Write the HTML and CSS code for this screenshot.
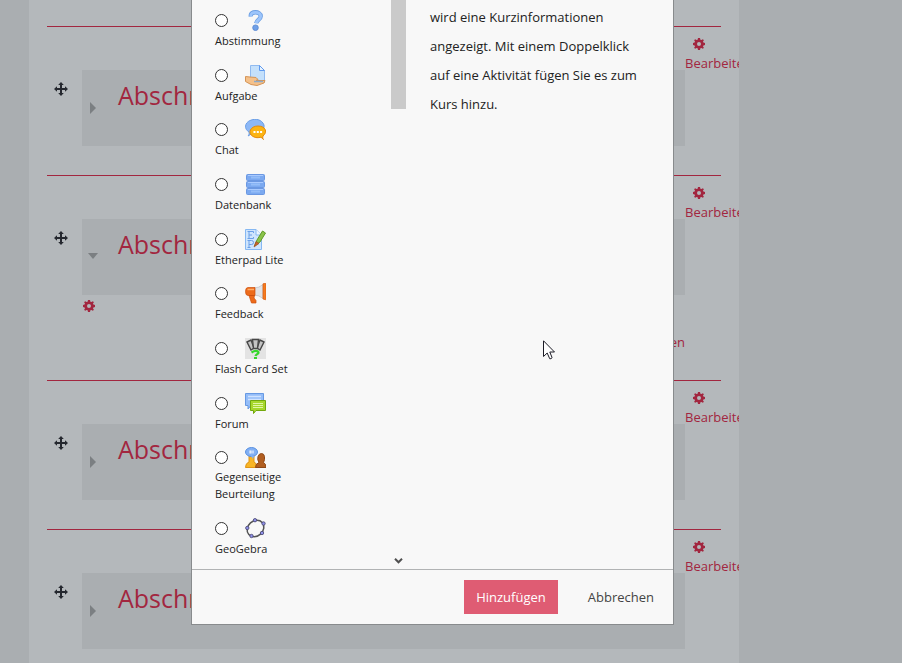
FILE: index.html
```html
<!DOCTYPE html>
<html lang="de">
<head>
<meta charset="utf-8">
<title>Aktivität hinzufügen</title>
<link rel="stylesheet" href="styles.css">
</head>
<body>
<svg class="defs" aria-hidden="true">
  <symbol id="move" viewBox="0 0 14 14"><path d="M7 0 4.200 3h1.800v3H3V4.200L0 7l3 2.800V8h3v3H4.200L7 14l2.800-3H8V8h3v1.800L14 7l-3-2.800V6H8V3h1.800z"/></symbol>
  <symbol id="gear" viewBox="0 0 12 12"><path fill-rule="evenodd" d="M5 0h2l.4 1.700 1 .4L9.900 1.200 10.900 2.200 10 3.600l.4 1L12 5v2l-1.600.4-.4 1 .9 1.400-1 1-1.500-.9-1 .4L7 12H5l-.4-1.700-1-.4-1.500.9-1-1L2 8.400l-.4-1L0 7V5l1.600-.4.400-1L1.100 2.200l1-1 1.500.9 1-.4zM6 4a2 2 0 1 0 0 4 2 2 0 0 0 0-4z"/></symbol>
</svg>

<main class="course">
  <section class="section">
    <button class="move" aria-label="Verschieben"><svg><use href="#move"/></svg></button>
    <div class="content"><div class="head"><span class="arrow"></span><h2>Abschnitt</h2></div></div>
    <a class="edit" href="#"><svg><use href="#gear"/></svg>Bearbeiten</a>
  </section>
  <section class="section">
    <button class="move" aria-label="Verschieben"><svg><use href="#move"/></svg></button>
    <div class="content">
      <div class="head"><span class="arrow open"></span><h2>Abschnitt</h2></div>
      <a class="settings" href="#" aria-label="Einstellungen"><svg><use href="#gear"/></svg></a>
      <a class="add" href="#">Material oder Aktivität hinzufügen</a>
    </div>
    <a class="edit" href="#"><svg><use href="#gear"/></svg>Bearbeiten</a>
  </section>
  <section class="section">
    <button class="move" aria-label="Verschieben"><svg><use href="#move"/></svg></button>
    <div class="content"><div class="head"><span class="arrow"></span><h2>Abschnitt</h2></div></div>
    <a class="edit" href="#"><svg><use href="#gear"/></svg>Bearbeiten</a>
  </section>
  <section class="section">
    <button class="move" aria-label="Verschieben"><svg><use href="#move"/></svg></button>
    <div class="content"><div class="head"><span class="arrow"></span><h2>Abschnitt</h2></div></div>
    <a class="edit" href="#"><svg><use href="#gear"/></svg>Bearbeiten</a>
  </section>
</main>

<div class="overlay">
  <form class="dialog" role="dialog" aria-label="Aktivität hinzufügen">
    <div class="body">
      <div class="options">
        <div class="option"><input type="radio" name="act" id="a1">
          <svg class="icon" viewBox="0 0 21 21"><path d="M5.800 6.500C5.500 3 8 2.300 10.500 2.300s5.200 1.200 5.200 3.900c0 3.300-4 3.400-4.500 7" fill="none" stroke="#6c9fe3" stroke-width="4.400"/><path d="M5.800 6.500C5.500 3 8 2.300 10.500 2.300s5.200 1.200 5.200 3.900c0 3.300-4 3.400-4.500 7" fill="none" stroke="#9dc5fb" stroke-width="2.800"/><circle cx="10.500" cy="17.700" r="2.800" fill="#6fa0e8" stroke="#5585cf" stroke-width=".8"/></svg>
          <label for="a1">Abstimmung</label></div>
        <div class="option"><input type="radio" name="act" id="a2">
          <svg class="icon" viewBox="0 0 21 21"><path d="M5.500.5h9l5 5v12h-14z" fill="#c4e0fb" stroke="#90baf0"/><path d="M14.500.5v5h5z" fill="#e6f3ff" stroke="#5f9af0"/><path d="M.5 11.500 5 12l6 .5 2 2-2 1h9l-1 2.500-7 2.500-6-1-5.500-3z" fill="#f5c18a" stroke="#d49456"/><path d="M9 16.500h9" stroke="#8daac8" stroke-width="1.500"/></svg>
          <label for="a2">Aufgabe</label></div>
        <div class="option"><input type="radio" name="act" id="a3">
          <svg class="icon" viewBox="0 0 21 21"><path d="M3 17c1-1 1.500-2.500 1-4-5-3-4.500-9 1-11.500S17 .5 19 6c1 6-6 9-11 8z" fill="#8db8f6" stroke="#6c9fe6"/><path d="M18.500 20.500c-.8-1-1-2-.5-3.500 5-4 2.500-10-5-10s-11 7-5 10.500c3 1.600 5 1.300 8 .700z" fill="#fcb413" stroke="#e58a0b"/><path d="M8.500 13h2m1.300 0h2m1.300 0h2" stroke="#fff" stroke-width="2"/></svg>
          <label for="a3">Chat</label></div>
        <div class="option"><input type="radio" name="act" id="a4">
          <svg class="icon" viewBox="0 0 21 21"><g fill="#7ba9f0" stroke="#6b98e2"><rect x="1.500" y=".5" width="18" height="6" rx="1"/><rect x="1.500" y="7.500" width="18" height="6" rx="1"/><rect x="1.500" y="14.500" width="18" height="6" rx="1"/></g><path d="M3 1.500h15M3 8.500h15M3 15.500h15" stroke="#a9caff"/><path d="M6 3.500h9M6 10.500h9M6 17.500h9" stroke="#94bdf8" stroke-width="2"/></svg>
          <label for="a4">Datenbank</label></div>
        <div class="option"><input type="radio" name="act" id="a5">
          <svg class="icon" viewBox="0 0 21 21"><path d="M.5.5H11l5.500 5.500v14.500H.5z" fill="#cfe5fd" stroke="#86b8f2"/><path d="M11 .5V6h5.500" fill="#edf6ff" stroke="#86b8f2"/><path d="M8.500 4V2.500h-6m1.500 0v7m-1.500 0h6V8M4 6h3M2.500 11.500h4q2 0 2 2t-2 2H4m0-4v7m-1.500 0h3" fill="none" stroke="#6ba0e8"/><path d="M9.500 17 12 11l5.500-9 3 2-5.500 9z" fill="#8bc34a" stroke="#5f9b26"/><path d="M9 18l2-5.500 3 2z" fill="#c8622d" stroke="#9a4d20" stroke-width=".6"/></svg>
          <label for="a5">Etherpad Lite</label></div>
        <div class="option"><input type="radio" name="act" id="a6">
          <svg class="icon" viewBox="0 0 21 21"><path d="M9 5q5 0 9-3.500v14q-4-3.500-9-3.500z" fill="#e2e3e6" stroke="#b9bbc0" stroke-width=".7"/><path d="M18 .8q3-1 3 0v15.500q0 1-3-.3z" fill="#f47b20" stroke="#d85b10" stroke-width=".7"/><path d="M3 4.500h7v8H3Q.5 12.500.5 8.500T3 4.500zM4 12.500h5.500L9 15l2 2.500v2.500H6.500z" fill="#ed6b1b" stroke="#cc500e" stroke-width=".7"/><path d="M2.500 6.500H9" stroke="#ffae69" stroke-width="1.500"/></svg>
          <label for="a6">Feedback</label></div>
        <div class="option"><input type="radio" name="act" id="a7">
          <svg class="icon" viewBox="0 0 21 21"><path d="M0 0h21v21H0z" fill="#e3e3e3"/><g fill="#c4c4c4" stroke="#484848" stroke-width="1.400"><path d="m2 4 4-2 3 8-3 2z"/><path d="m19 4-4-2-3 8 3 2z"/><path d="M7.500 1.500h6l-1 9h-4z"/></g><path d="M6.500 14.500q4-2.500 6.500-1c2 2-2 2.500-2.500 4.500" fill="none" stroke="#35d62c" stroke-width="2.200"/><path d="M9 19h3v2H9z" fill="#35d62c"/></svg>
          <label for="a7">Flash Card Set</label></div>
        <div class="option"><input type="radio" name="act" id="a8">
          <svg class="icon" viewBox="0 0 21 21"><path d="M.5.5h18v12H6l-3 3.500v-3.500H.5z" fill="#94bdf8" stroke="#6799e3"/><path d="M3 3.500h13M3 6.500h13" stroke="#cfe3ff" stroke-width="1.500"/><path d="M5.500 7.500h15v10H11l-2.500 3v-3h-3z" fill="#a6d72b" stroke="#72a80d"/><path d="M8 10.500h10M8 12.500h10M8 14.500h10" stroke="#e1f6a5"/></svg>
          <label for="a8">Forum</label></div>
        <div class="option two-line"><input type="radio" name="act" id="a9">
          <svg class="icon" viewBox="0 0 21 21"><path d="M.5 20.500Q.5 16 4 15V9h5v6q3 1 3 5.500z" fill="#f8b525" stroke="#df9416"/><path d="M10.500 20.500q0-4 3.500-5-2-3-1-6t3.500-3 3 3-1 6q2.500 1 2.500 5z" fill="#b15e20" stroke="#8e4816"/><ellipse cx="6.500" cy="5" rx="6" ry="4.500" fill="#82b0f4" stroke="#5a91e0"/><path d="m6 9 2 3 1-3z" fill="#82b0f4"/><path d="M5 3.500v3m1-3v3m2-3v3" stroke="#fff"/></svg>
          <label for="a9">Gegenseitige Beurteilung</label></div>
        <div class="option"><input type="radio" name="act" id="a10">
          <svg class="icon" viewBox="0 0 21 21"><ellipse cx="10.500" cy="10.500" rx="9" ry="7.500" transform="rotate(-42 10.500 10.500)" fill="none" stroke="#555" stroke-width="1.500"/><g fill="#9090e8" stroke="#44446c" stroke-width=".8"><circle cx="10" cy="2.200" r="1.700"/><circle cx="18.500" cy="5.500" r="1.700"/><circle cx="17" cy="15" r="1.700"/><circle cx="6.500" cy="18" r="1.700"/><circle cx="2.300" cy="10" r="1.700"/></g></svg>
          <label for="a10">GeoGebra</label></div>
      </div>
      <div class="scrollbar"><span class="thumb"></span><svg class="down" viewBox="0 0 9 6"><path d="m1 .8 3.500 3.500L8 .8" fill="none" stroke="#505050" stroke-width="2"/></svg></div>
      <p class="help">wird eine Kurzinformationen angezeigt. Mit einem Doppelklick auf eine Aktivität fügen Sie es zum Kurs hinzu.</p>
    </div>
    <div class="footer">
      <button type="button" class="btn primary">Hinzufügen</button>
      <button type="button" class="btn">Abbrechen</button>
    </div>
  </form>
</div>
<svg class="pointer" viewBox="0 0 12 20" aria-hidden="true"><path d="M.5.800v15.700l3.700-3.500 2.500 5.700q1.300.5 2.400-1L6.800 12h4.700z" fill="#fff" stroke="#1c1c26"/></svg>
</body>
</html>
```

FILE: styles.css
```css
* { box-sizing: border-box; }

body {
  margin: 0;
  height: 100vh;
  overflow: hidden;
  background: #aaaeb1;
  color: #222;
  font: 13px/18px "Open Sans", "Noto Sans", sans-serif;
}

button { font: inherit; border: 0; background: none; padding: 0; }
a { color: #a2263f; text-decoration: none; }
.defs { display: none; }

.course {
  margin: 0 163px 0 29px;
  padding: 26px 18px 0;
  min-height: 100vh;
  overflow: hidden;
  background: #b4b8bb;
}

.section {
  display: flex;
  align-items: flex-start;
  border-top: 1px solid #a2263f;
  padding-bottom: 29px;
}

.move { width: 35px; padding: 55px 0 0 7px; text-align: left; }
.move svg { display: block; width: 14px; height: 14px; fill: #25282f; }
.content { flex: 1; padding-top: 43px; }

.head {
  display: flex;
  height: 76px;
  padding: 7px 8px;
  background: #aaaeb1;
}

.arrow {
  width: 6px;
  height: 12px;
  margin: 25px 22px 0 0;
  background: #7b7f82;
  clip-path: polygon(0 0, 100% 50%, 0 100%);
}
.arrow.open {
  width: 10px;
  height: 6px;
  margin: 27px 20px 0 -2px;
  clip-path: polygon(0 0, 100% 0, 50% 100%);
}

.head h2 {
  margin: 0;
  color: #a2263f;
  font-size: 25px;
  font-weight: 400;
  line-height: 36px;
}

.settings, .edit, .add { display: block; }
.settings svg, .edit svg { display: block; width: 12px; height: 12px; fill: #a2263f; }
.settings { padding: 5px 1px 22px; }
.add { text-align: right; line-height: 17px; }

.edit { width: 36px; padding-top: 11px; white-space: nowrap; }
.edit svg { margin: 0 8px 4px; }

.overlay {
  position: fixed;
  inset: 0;
  display: flex;
  padding: 0 228px 38px 191px;
}

.dialog {
  flex: 1;
  display: flex;
  flex-direction: column;
  border: 1px solid #888b8d;
  border-top: 0;
  background: #f8f8f8;
}

.body { flex: 1; display: flex; }

.options {
  width: 199px;
  padding: 10px 0 12px 23px;
  display: flex;
  flex-direction: column;
  justify-content: space-between;
}

.option {
  display: grid;
  grid-template-columns: 13px 21px;
  column-gap: 17px;
  row-gap: 1px;
  align-items: center;
}
.option.two-line { row-gap: 0; }

.option input {
  appearance: none;
  width: 13px;
  height: 13px;
  margin: 0;
  border: 1px solid #333;
  border-radius: 50%;
  background: #fff;
}

.icon { width: 21px; height: 21px; }

.option label {
  grid-column: 1 / -1;
  width: 80px;
  font-size: 11px;
  line-height: 17px;
}

.scrollbar {
  width: 15px;
  padding-bottom: 5px;
  display: flex;
  flex-direction: column;
  justify-content: space-between;
  align-items: center;
}
.thumb { width: 15px; height: 109px; background: #cacaca; }
.down { width: 9px; height: 6px; }

.help {
  flex: 1;
  margin: 0;
  padding: 3px 24px;
  line-height: 29px;
}

.footer {
  display: flex;
  justify-content: flex-end;
  gap: 18px;
  padding: 10px 7px;
  border-top: 1px solid #b1b3b4;
}

.btn { height: 34px; padding: 0 12px; color: #444; }
.btn.primary { background: #df5c73; color: #fff; }

.pointer {
  position: fixed;
  left: 543px;
  top: 340px;
  width: 12px;
  height: 20px;
}
```
